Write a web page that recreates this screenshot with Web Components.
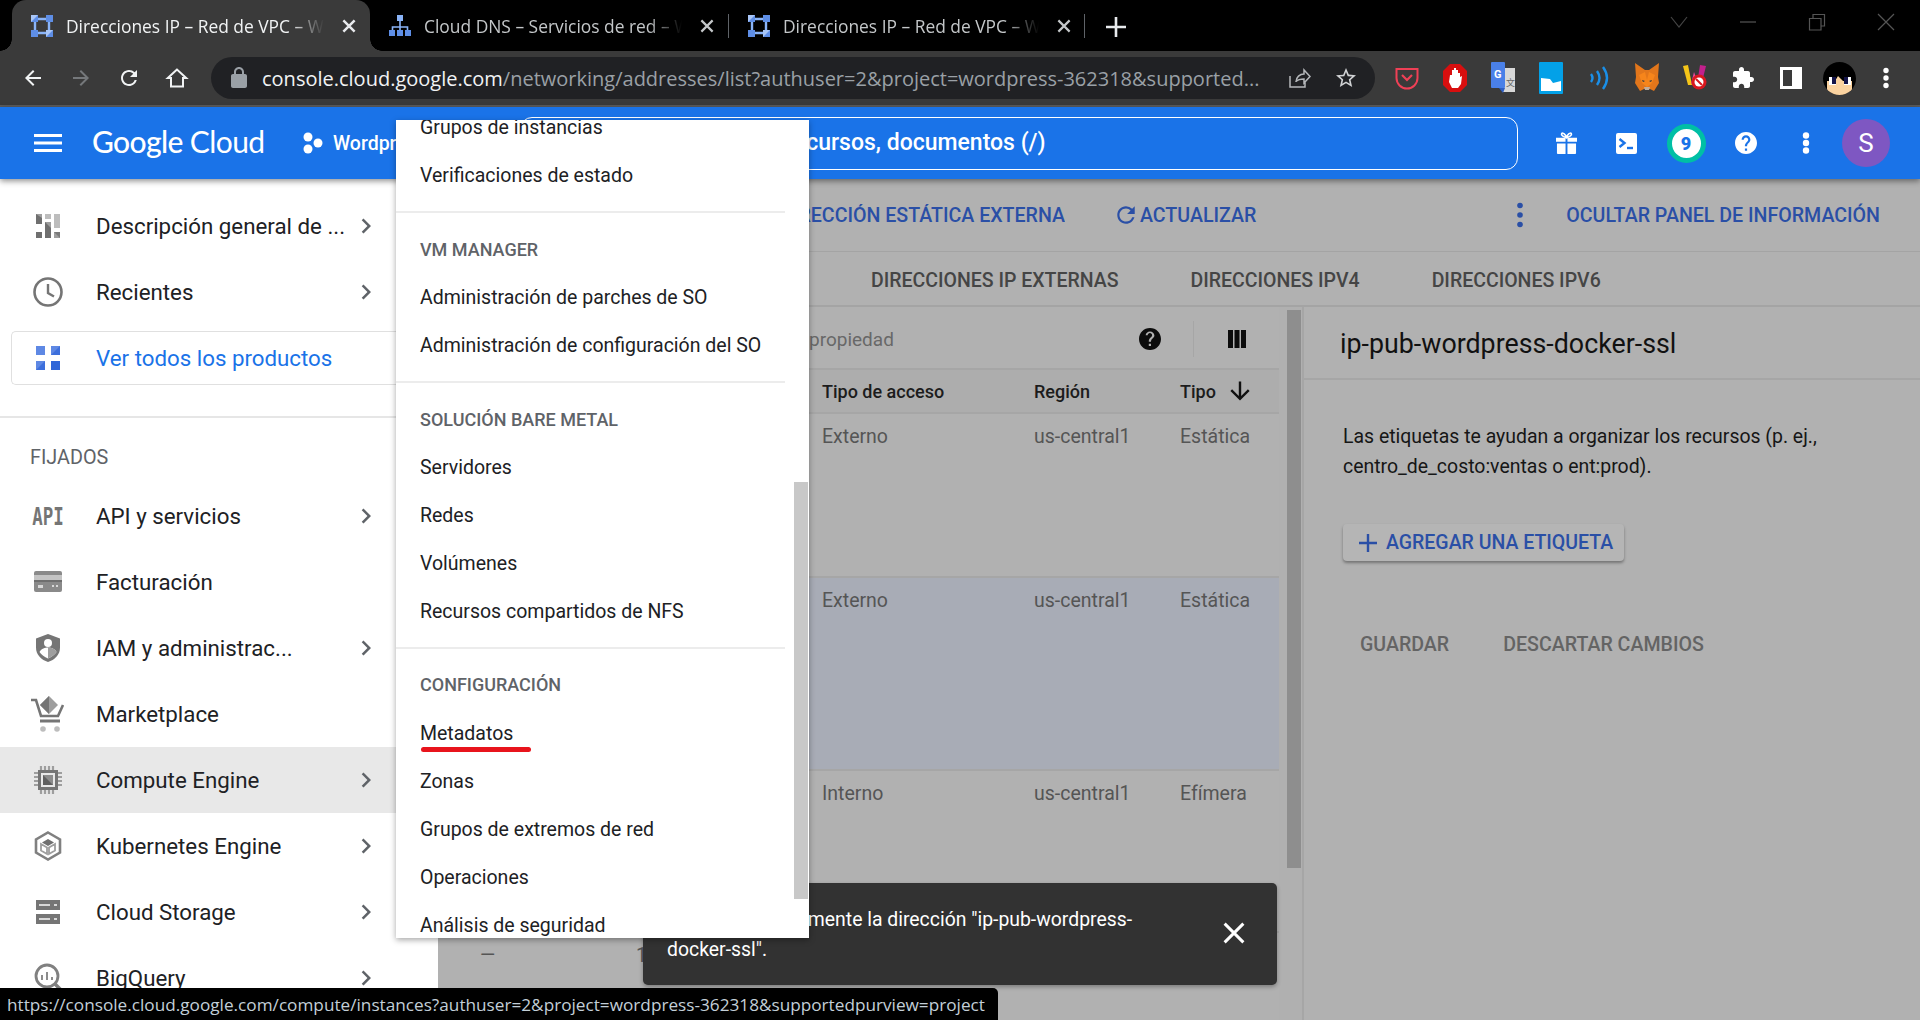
<!DOCTYPE html>
<html lang="es"><head><meta charset="utf-8"><title>Direcciones IP</title>
<style>
html,body{margin:0;height:100%;overflow:hidden;background:#fff;font-family:Roboto,"Liberation Sans",sans-serif}
</style></head><body>
<gc-app>
<browser-tabs></browser-tabs>
<browser-toolbar></browser-toolbar>
<gc-header></gc-header>
<gc-main>
  <gc-sidebar>
    <nav-item chevron><svg slot="icon" width="24" height="24" viewBox="0 0 24 24"><path fill="#9e9e9e" d="M0 0h6v10H0z"/><path fill="#6f6f6f" d="M0 0l6 4v6H0z"/><path fill="#6f6f6f" d="M0 18h6v6H0z"/><path fill="#bdbdbd" d="M9 0h6v5H9z"/><path fill="#9e9e9e" d="M9 8h6v16H9z"/><path fill="#6f6f6f" d="M9 8l6 6v10H9z"/><path fill="#bdbdbd" d="M18 0h6v14h-6z"/><path fill="#7a7a7a" d="M18 18h6v6h-6z"/><path fill="#9e9e9e" d="M18 18l6 6h-6z"/></svg>Descripción general de ...</nav-item>
    <nav-item chevron><svg slot="icon" width="32" height="32" viewBox="0 0 32 32" style="margin:-4px"><circle cx="16" cy="16" r="13.5" fill="none" stroke="#757575" stroke-width="2.6"/><path d="M16 8v9l6 3.5" fill="none" stroke="#757575" stroke-width="2.4"/></svg>Recientes</nav-item>
    <nav-item boxed><svg slot="icon" width="24" height="24" viewBox="0 0 24 24"><path fill="#5e88e4" d="M0 0h9v9H0z"/><path fill="#5e88e4" d="M15 0h9v9h-9z"/><path fill="#3d6fdc" d="M24 0v9h-9z"/><path fill="#5e88e4" d="M0 15h9v9H0z"/><path fill="#3d6fdc" d="M0 24l9-9v9z"/><path fill="#2f66d8" d="M15 15h9v9h-9z"/></svg>Ver todos los productos</nav-item>
    <nav-divider></nav-divider>
    <nav-heading>FIJADOS</nav-heading>
    <nav-item chevron><svg slot="icon" width="32" height="24" viewBox="0 0 44 24" preserveAspectRatio="none" style="margin:0 -4px"><text x="0.500" y="21" font-family="DejaVu Sans Mono" font-weight="700" font-size="24" fill="#757575">API</text></svg>API y servicios</nav-item>
    <nav-item><svg slot="icon" width="28" height="24" viewBox="0 0 28 24" style="margin:0 -2px"><rect y="1" width="28" height="21" rx="2" fill="#8a8a8a"/><path fill="#c4c4c4" d="M0 5h28v5H0z"/><path fill="#6f6f6f" d="M0 10h28v2H0z"/><path fill="#d8d8d8" d="M4 15h5v3H4zM18 15h2v2h-2zM22 15h2v2h-2z"/></svg>Facturación</nav-item>
    <nav-item chevron><svg slot="icon" width="24" height="30" viewBox="0 0 24 30" style="margin:-3px 0"><path fill="#757575" d="M12 1l12 4.5v9C24 22 18.5 27 12 29 5.500 27 0 22 0 14.500v-9z"/><circle cx="12" cy="10" r="4" fill="#fff"/><path fill="#fff" d="M3.500 19c2-3.500 5.500-4.500 8.500-4.500s6.500 1 8.500 4.500c-2 3-5 5-8.500 6.500-3.500-1.500-6.500-3.500-8.500-6.500z"/><path fill="#9e9e9e" d="M12 14.500c3 0 6.500 1 8.500 4.500-2 3-5 5-8.500 6.500z"/></svg>IAM y administrac...</nav-item>
    <nav-item><svg slot="icon" width="34" height="36" viewBox="0 0 34 36" style="margin:-6px -5px"><path fill="#9e9e9e" d="M18 0l9 9-9 9-9-9z"/><path fill="#757575" d="M18 0v18l-9-9z"/><path d="M0 4h5l5 16h17l5-11" fill="none" stroke="#757575" stroke-width="2.600"/><path d="M9 25h20" stroke="#757575" stroke-width="3"/><circle cx="12" cy="33" r="2.800" fill="#bdbdbd"/><circle cx="26" cy="33" r="2.800" fill="#bdbdbd"/></svg>Marketplace</nav-item>
    <nav-item chevron active><svg slot="icon" width="28" height="28" viewBox="0 0 28 28" style="margin:-2px"><rect x="4" y="4" width="20" height="20" fill="#757575"/><rect x="7" y="7" width="14" height="14" fill="#e8e8e8"/><rect x="9" y="9" width="10" height="10" fill="#8c8c8c"/><path fill="#5f5f5f" d="M9 9l10 10H9z"/><path d="M7 0v4M11 0v4M15 0v4M19 0v4M7 24v4M11 24v4M15 24v4M19 24v4M0 7h4M0 11h4M0 15h4M0 19h4M24 7h4M24 11h4M24 15h4M24 19h4" stroke="#9e9e9e" stroke-width="2.200"/></svg>Compute Engine</nav-item>
    <nav-item chevron><svg slot="icon" width="28" height="30" viewBox="0 0 28 30" style="margin:-3px -2px"><path d="M14 1.500l12 7v13l-12 7-12-7v-13z" fill="none" stroke="#808080" stroke-width="2.600"/><path fill="#6f6f6f" d="M14 8l6 3.500-6 3.500-6-3.500z"/><path fill="none" stroke="#9e9e9e" stroke-width="1.800" d="M7 13l6 3.500V23l-6-3.500zM21 13l-6 3.500V23l6-3.500z"/></svg>Kubernetes Engine</nav-item>
    <nav-item chevron><svg slot="icon" width="24" height="24" viewBox="0 0 24 24"><path fill="#757575" d="M0 0h24v10H0zM0 14h24v10H0z"/><path fill="#d8d8d8" d="M3 4h11v2H3zM3 18h11v2H3zM18 4h3v2h-3zM18 18h3v2h-3z"/></svg>Cloud Storage</nav-item>
    <nav-item chevron><svg slot="icon" width="28" height="30" viewBox="0 0 28 30" style="margin:-3px -2px"><circle cx="13" cy="13" r="11" fill="none" stroke="#808080" stroke-width="2.800"/><path d="M8 12v5M13 9v8M18 14v3" stroke="#8c8c8c" stroke-width="2"/><path d="M21 21l7 7" stroke="#808080" stroke-width="3.500"/></svg>BigQuery</nav-item>
  </gc-sidebar>
  <gc-content></gc-content>
</gc-main>
<gc-flyout>
  <fly-item>Grupos de instancias</fly-item>
  <fly-item>Verificaciones de estado</fly-item>
  <fly-divider></fly-divider>
  <fly-heading>VM MANAGER</fly-heading>
  <fly-item>Administración de parches de SO</fly-item>
  <fly-item>Administración de configuración del SO</fly-item>
  <fly-divider></fly-divider>
  <fly-heading>SOLUCIÓN BARE METAL</fly-heading>
  <fly-item>Servidores</fly-item>
  <fly-item>Redes</fly-item>
  <fly-item>Volúmenes</fly-item>
  <fly-item>Recursos compartidos de NFS</fly-item>
  <fly-divider></fly-divider>
  <fly-heading>CONFIGURACIÓN</fly-heading>
  <fly-item marked>Metadatos</fly-item>
  <fly-item>Zonas</fly-item>
  <fly-item>Grupos de extremos de red</fly-item>
  <fly-item>Operaciones</fly-item>
  <fly-item>Análisis de seguridad</fly-item>
</gc-flyout>
<gc-snackbar>Se creó correctamente la dirección "ip-pub-wordpress-docker-ssl".</gc-snackbar>
<status-bubble>https://console.cloud.google.com/compute/instances?authuser=2&amp;project=wordpress-362318&amp;supportedpurview=project</status-bubble>
</gc-app>
<script>
function def(tag, html){
  customElements.define(tag, class extends HTMLElement{
    constructor(){super();this.attachShadow({mode:'open'}).innerHTML=html;}
  });
}
const UI='"Open Sans","Noto Sans",sans-serif';
const xIcon=(s,c,w)=>`<svg width="${s}" height="${s}" viewBox="0 0 16 16"><path d="M3 3l10 10M13 3L3 13" stroke="${c}" stroke-width="${w}" fill="none"/></svg>`;
const netFav=`<svg width="22" height="22" viewBox="0 0 22 22"><path d="M4 3v16M18 3v16M4 4h14M4 18h14" stroke="#8ab4f8" stroke-width="2.400" fill="none"/><path fill="#5e8ee6" d="M0 0h7v7H0zM15 0h7v7h-7zM0 15h7v7H0zM15 15h7v7h-7z"/><path fill="#a9c6f7" d="M0 0h7L0 7zM15 15h7l-7 7z"/></svg>`;
const dnsFav=`<svg width="22" height="22" viewBox="0 0 22 22"><path d="M11 6v6M3.500 15v-3h15v3M11 12v3" stroke="#8ab4f8" stroke-width="1.600" fill="none"/><path fill="#8ab4f8" d="M8 0h6v6H8z"/><path fill="#5e8ee6" d="M0 15h6v6H0zM8 15h6v6H8zM16 15h6v6h-6z"/></svg>`;

def('gc-app',`<style>:host{display:flex;flex-direction:column;height:1020px;width:1920px;position:relative;overflow:hidden}</style><slot></slot>`);

def('tab-strip-item',`<style>
:host{display:flex;align-items:center;height:42px;flex:none;width:358px;box-sizing:border-box;padding-left:19px;color:#c4c7c9;font:17.400px ${UI};position:relative}
:host([active]){background:#3a3a3a;color:#f1f3f4;border-radius:14px 14px 0 0;height:51px}
:host([active])::before,:host([active])::after{content:"";position:absolute;bottom:0;width:12px;height:12px;background:radial-gradient(circle at 0 0,transparent 11.500px,#3a3a3a 12px)}
:host([active])::before{left:-12px}
:host([active])::after{right:-12px;background:radial-gradient(circle at 100% 0,transparent 11.500px,#3a3a3a 12px)}
.t{margin-left:13px;width:266px;white-space:nowrap;overflow:hidden;-webkit-mask-image:linear-gradient(90deg,#000 84%,transparent 97%);mask-image:linear-gradient(90deg,#000 84%,transparent 97%)}
.x{margin-left:8px;display:flex}
:host(.n) .t{width:264px}
</style><slot name="fav"></slot><span class="t"><slot></slot></span><span class="x"><slot name="x"></slot></span>`);

def('browser-tabs',`<style>
:host{display:flex;height:51px;background:#000;flex:none;align-items:flex-start;padding-left:12px;box-sizing:border-box}
.sep{width:1px;height:24px;background:#5f6368;margin-top:14px;flex:none}
.pl{margin:15px 0 0 19px;flex:none}
.end{margin-left:auto;display:flex;align-items:center;height:44px;gap:0}
.end span{width:69px;display:flex;justify-content:center}
tab-strip-item{align-self:flex-start}
.i{margin-top:5px}
.n{margin-right:-3px}
</style>
<tab-strip-item active>${netFav.replace('<svg','<svg slot="fav"')}Direcciones IP – Red de VPC – Wordpress${xIcon(18,'#e8eaed',2.2).replace('<svg','<svg slot="x"')}</tab-strip-item>
<tab-strip-item class="i">${dnsFav.replace('<svg','<svg slot="fav"')}Cloud DNS – Servicios de red – Wordpress${xIcon(18,'#c4c7c9',1.900).replace('<svg','<svg slot="x"')}</tab-strip-item>
<span class="sep"></span>
<tab-strip-item class="i n">${netFav.replace('<svg','<svg slot="fav"')}Direcciones IP – Red de VPC – Wordpress${xIcon(18,'#c4c7c9',1.900).replace('<svg','<svg slot="x"')}</tab-strip-item>
<span class="sep"></span>
<svg class="pl" width="24" height="24" viewBox="0 0 24 24"><path d="M12 2v20M2 12h20" stroke="#e8eaed" stroke-width="2.600"/></svg>
<div class="end">
<span><svg width="20" height="12" viewBox="0 0 20 12"><path d="M2 1l8 10 8-10" stroke="#444" stroke-width="1.200" fill="none"/></svg></span>
<span><svg width="16" height="2"><path d="M0 1h16" stroke="#555" stroke-width="1.200"/></svg></span>
<span><svg width="18" height="18" viewBox="0 0 18 18"><path d="M1.500 5.500h11.500v11.500H1.500zM5 5.500V1.500h11.500v11.500H13" stroke="#555" stroke-width="1.200" fill="none"/></svg></span>
<span><svg width="18" height="18" viewBox="0 0 18 18"><path d="M1 1l16 16M17 1L1 17" stroke="#555" stroke-width="1.200"/></svg></span>
</div>`);

def('browser-toolbar',`<style>
:host{display:flex;align-items:center;height:56px;background:#3a3a3a;border-bottom:2px solid #5c5c5c;box-sizing:border-box;flex:none;padding:0 0 0 21px}
.nav{display:flex;width:48px;flex:none}
.omni{margin-left:-2px;width:1164px;height:42px;border-radius:21px;background:#202124;display:flex;align-items:center;flex:none;box-sizing:border-box;padding-left:16px;font:20px ${UI};color:#9aa0a6;white-space:nowrap}
.omni b{font-weight:400;color:#f1f3f4}
.url{margin-left:11px;width:1000px;overflow:hidden}
.a{display:flex;width:47px;flex:none;justify-content:center}
.ext{display:flex;align-items:center;margin-left:8px}
.ext span{width:48px;display:flex;justify-content:center;align-items:center}
</style>
<span class="nav"><svg width="24" height="24" viewBox="0 0 24 24"><path fill="#f1f3f4" d="M20 11H7.830l5.590-5.590L12 4l-8 8 8 8 1.410-1.410L7.830 13H20v-2z"/></svg></span>
<span class="nav"><svg width="24" height="24" viewBox="0 0 24 24"><path fill="#75787b" d="M12 4l-1.410 1.410L16.170 11H4v2h12.170l-5.580 5.590L12 20l8-8z"/></svg></span>
<span class="nav"><svg width="24" height="24" viewBox="0 0 24 24"><path fill="#f1f3f4" d="M17.650 6.350A7.958 7.958 0 0012 4c-4.420 0-7.990 3.580-7.990 8s3.570 8 7.990 8c3.730 0 6.840-2.550 7.730-6h-2.080A5.990 5.990 0 0112 18c-3.310 0-6-2.690-6-6s2.690-6 6-6c1.660 0 3.140.690 4.220 1.780L13 11h7V4l-2.350 2.350z"/></svg></span>
<span class="nav"><svg width="24" height="24" viewBox="0 0 24 24"><path fill="none" stroke="#f1f3f4" stroke-width="2" d="M12 3.500L2.800 12H6v8.500h12V12h3.200z"/></svg></span>
<div class="omni">
<svg width="24" height="24" viewBox="0 0 24 24" style="flex:none"><path fill="#9aa0a6" d="M18 8h-1V6c0-2.760-2.240-5-5-5S7 3.240 7 6v2H6c-1.100 0-2 .9-2 2v10c0 1.100.9 2 2 2h12c1.100 0 2-.9 2-2V10c0-1.100-.9-2-2-2zM9 6c0-1.660 1.340-3 3-3s3 1.340 3 3v2H9V6z"/></svg>
<span class="url"><b>console.cloud.google.com</b>/networking/addresses/list?authuser=2&amp;project=wordpress-362318&amp;supported...</span>
<span class="a" style="margin-left:13px"><svg width="24" height="24" viewBox="0 0 24 24"><path fill="none" stroke="#b5b8bb" stroke-width="1.500" d="M3 10v11h15v-5M9 16c0-5 4-8 8-8V4l6 6.500-6 6.500v-4c-3 0-6 .5-8 2.500z"/></svg></span>
<span class="a"><svg width="24" height="24" viewBox="0 0 24 24"><path fill="#d0d2d4" d="M22 9.240l-7.190-.620L12 2 9.190 8.630 2 9.240l5.460 4.730L5.820 21 12 17.270 18.180 21l-1.630-7.030L22 9.240zM12 15.400l-3.760 2.270 1-4.280-3.320-2.880 4.380-.380L12 6.100l1.710 4.040 4.380.380-3.320 2.880 1 4.280L12 15.400z"/></svg></span>
</div>
<div class="ext">
<span><svg width="24" height="24" viewBox="0 0 24 24"><path fill="none" stroke="#ef4056" stroke-width="2" d="M1.500 3h21v9a10.500 10.500 0 01-21 0z"/><path fill="none" stroke="#ef4056" stroke-width="2.200" d="M7 9l5 5 5-5"/></svg></span>
<span><svg width="24" height="30" viewBox="0 0 24 30"><path fill="#d80f0f" d="M7 1h10l7 7v14l-7 7H7l-7-7V8z"/><path fill="#fff" d="M7 12h2V7h2v-2h2v2h2v3h2v4l2-1-1 8-3 4h-6l-3-6z"/></svg></span>
<span><svg width="24" height="32" viewBox="0 0 24 32"><path fill="#d8d8d8" d="M8 6h16v24H12z"/><rect width="14" height="26" rx="1" fill="#4a80e8"/><path fill="#2e5fc4" d="M8 26h6l-2 5z"/><text x="3" y="16" font-family="Roboto" font-weight="700" font-size="11" fill="#fff">G</text><text x="15" y="24" font-family="Noto Sans CJK SC" font-size="9" fill="#666">文</text></svg></span>
<span><svg width="24" height="32" viewBox="0 0 24 32"><rect width="24" height="32" rx="1" fill="#03a1e8"/><path fill="#fff" d="M2 16l9 1 3 4 8-2v10H2z"/></svg></span>
<span><svg width="20" height="24" viewBox="0 0 20 24"><path d="M2 8q3 4 0 8M8 5q5 7 0 14M14 1q8 11 0 22" fill="none" stroke="#1a8fe8" stroke-width="2.400"/></svg></span>
<span><svg width="24" height="30" viewBox="0 0 24 30"><path fill="#e2761b" d="M0 0l10 7h4l10-7-1 14 1 6-5 8-4-2h-6l-4 2-5-8 1-6z"/><path fill="#f6851b" d="M4 12l6-3 2 8 2-8 6 3-3 8-5 4-5-4z"/><path fill="#c0ad9e" d="M9 24h6l-1 3h-4z"/><path fill="#233447" d="M7 17l3 1-2 1zM17 17l-3 1 2 1z"/></svg></span>
<span><svg width="24" height="28" viewBox="0 0 24 28"><path fill="#f5c518" d="M0 2l5-1 4 20H5z"/><path fill="#e6499a" d="M8 20l3-12 3 8z"/><path fill="#c2208c" d="M17 1l6 1-3 12h-5z"/><circle cx="16" cy="18" r="7.500" fill="#d9171e"/><circle cx="16" cy="18" r="4.500" fill="#fff"/><path d="M13 15l6 6" stroke="#d9171e" stroke-width="2"/></svg></span>
<span><svg width="24" height="24" viewBox="0 0 24 24"><path fill="#fff" d="M20.500 11H19V7c0-1.100-.9-2-2-2h-4V3.500C13 2.120 11.880 1 10.500 1S8 2.120 8 3.500V5H4c-1.100 0-1.990.9-1.990 2v3.800H3.500c1.490 0 2.700 1.210 2.700 2.700s-1.210 2.700-2.700 2.700H2V20c0 1.100.9 2 2 2h3.800v-1.500c0-1.490 1.210-2.700 2.700-2.700 1.490 0 2.700 1.210 2.700 2.700V22H17c1.100 0 2-.9 2-2v-4h1.500c1.380 0 2.500-1.120 2.500-2.500S21.880 11 20.500 11z"/></svg></span>
<span><svg width="22" height="22" viewBox="0 0 22 22"><path fill="#fff" fill-rule="evenodd" d="M0 0h22v22H0zM3 3v16h9V3z"/></svg></span>
<span><svg width="33" height="33" viewBox="0 0 33 33"><defs><clipPath id="av"><circle cx="16.500" cy="16.500" r="16.500"/></clipPath></defs><g clip-path="url(#av)"><rect width="33" height="33" fill="#000"/><path fill="#fbd3a0" d="M4 19h8l3-5 3 3 2 2h9v14H4z"/><path fill="#fff" d="M6 15h7v8H6zM21 15h7v8h-7z"/><path fill="#14144a" d="M9 15h4v7H9zM21 15h4v7h-4z"/></g></svg></span>
<span style="width:46px"><svg width="8" height="22" viewBox="0 0 8 22"><circle cx="4" cy="3.500" r="2.700" fill="#fff"/><circle cx="4" cy="11" r="2.700" fill="#fff"/><circle cx="4" cy="18.500" r="2.700" fill="#fff"/></svg></span>
</div>`);

def('gc-header',`<style>
:host{display:flex;align-items:center;height:72px;flex:none;background:#1a73e8;box-shadow:0 2px 6px rgba(0,0,0,.45);position:relative;z-index:3;color:#fff;box-sizing:border-box;padding-left:34px}
.logo{font:500 30px/36px Lato,Roboto,sans-serif;letter-spacing:-.6px;margin:-5px 0 0 30px;width:177px;white-space:nowrap;flex:none}
.logo i{font-style:normal;font-weight:400}
.proj{display:flex;align-items:center;margin-left:34px;width:217px;font:500 19.500px Roboto,sans-serif;flex:none;gap:10px;overflow:hidden}
.search{width:998px;height:53px;box-sizing:border-box;border:1.500px solid #fff;border-radius:12px;display:flex;align-items:center;padding:0 0 2px 61px;font:500 23px Roboto,sans-serif;white-space:nowrap;flex:none}
.i{display:flex;justify-content:center;width:60px;flex:none}
.acts{display:flex;align-items:center;margin-left:18px}
.badge{width:39px;height:39px;border-radius:50%;border:5px solid #00bfa5;background:#fff;box-sizing:border-box;color:#1a73e8;font:900 18px Roboto,sans-serif;display:flex;align-items:center;justify-content:center}
.av{width:48px;height:48px;border-radius:50%;background:#7e57c2;font:400 26px Roboto,sans-serif;display:flex;align-items:center;justify-content:center;margin-left:6px}
</style>
<svg width="28" height="18" viewBox="0 0 28 18" style="flex:none"><path fill="#fff" d="M0 0h28v3H0zM0 7.500h28v3H0zM0 15h28v3H0z"/></svg>
<span class="logo">Google <i>Cloud</i></span>
<span class="proj"><svg width="20" height="24" viewBox="0 0 20 24" style="flex:none"><circle cx="5" cy="6" r="4.500" fill="#fff"/><circle cx="5" cy="18" r="4.500" fill="#fff"/><circle cx="15" cy="12" r="4.500" fill="#fff"/></svg>Wordpress</span>
<div class="search">Buscar productos y recursos, documentos (/)</div>
<div class="acts">
<span class="i"><svg width="21" height="22" viewBox="0 0 22 27" preserveAspectRatio="none"><path fill="#fff" d="M0 7h10v5H0zM12 7h10v5H12zM1 14h9v13H2a1 1 0 01-1-1zM12 14h9v12a1 1 0 01-1 1h-8z"/><path d="M11 7C8 6 5 4 6 2s4 1 5 5zm0 0c3-1 6-3 5-5s-4 1-5 5z" fill="none" stroke="#fff" stroke-width="1.800"/></svg></span>
<span class="i"><svg width="21" height="21" viewBox="0 0 21 21"><rect width="21" height="21" rx="2" fill="#fff"/><path d="M3.500 6l5 4-5 4" fill="none" stroke="#1a73e8" stroke-width="2.400"/><path d="M11 15h6" stroke="#1a73e8" stroke-width="2.400"/></svg></span>
<span class="i"><span class="badge">9</span></span>
<span class="i"><svg viewBox="2 2 20 20" style="width:22px;height:22px"><path fill="#fff" d="M12 2C6.480 2 2 6.480 2 12s4.480 10 10 10 10-4.480 10-10S17.520 2 12 2zm1 17h-2v-2h2v2zm2.070-7.750l-.9.920C13.450 12.900 13 13.500 13 15h-2v-.5c0-1.100.450-2.100 1.170-2.830l1.240-1.260c.370-.360.590-.860.590-1.410 0-1.100-.9-2-2-2s-2 .9-2 2H8c0-2.210 1.790-4 4-4s4 1.790 4 4c0 .880-.360 1.680-.930 2.250z"/></svg></span>
<span class="i"><svg width="8" height="22" viewBox="0 0 8 22"><circle cx="4" cy="3.500" r="3.200" fill="#fff"/><circle cx="4" cy="11" r="3.200" fill="#fff"/><circle cx="4" cy="18.500" r="3.200" fill="#fff"/></svg></span>
<span class="av">S</span>
</div>`);

def('gc-main',`<style>:host{display:flex;flex:1;min-height:0}</style><slot></slot>`);
def('gc-sidebar',`<style>:host{display:block;width:438px;flex:none;background:#fff;padding-top:14px;box-sizing:border-box;overflow:hidden}</style><slot></slot>`);
def('nav-item',`<style>
:host{display:flex;align-items:center;height:66px;padding-left:36px;font:400 22.300px Roboto,sans-serif;color:#202124;position:relative;white-space:nowrap}
.ic{width:24px;height:24px;display:flex;align-items:center;justify-content:center;flex:none;margin-right:36px}
.ch{display:none;position:absolute;left:351px;top:18px}
:host([chevron]) .ch{display:block}
:host([active]){background:#e8e8e8}
:host([boxed]){color:#1a73e8;height:54px;margin:6px 0 6px 11px;padding-left:24px;border:1px solid #e0e0e0;border-right:0;border-radius:5px 0 0 5px;box-sizing:border-box}
</style><span class="ic"><slot name="icon"></slot></span><slot></slot>
<svg class="ch" width="30" height="30" viewBox="0 0 24 24"><path fill="#5f6368" d="M10 6L8.590 7.410 13.170 12l-4.580 4.590L10 18l6-6z"/></svg>`);
def('nav-divider',`<style>:host{display:block;height:2px;background:#e6e6e6;margin-top:31px}</style>`);
def('nav-heading',`<style>:host{display:flex;align-items:center;height:65px;padding:14px 0 0 30px;box-sizing:border-box;font:400 19.800px Roboto,sans-serif;color:#5f6368}</style><slot></slot>`);

def('gc-flyout',`<style>
:host{position:absolute;left:396px;top:120px;width:413px;height:818px;background:#fff;box-shadow:0 2px 6px rgba(0,0,0,.35);overflow:hidden;z-index:5;display:block}
.inner{margin-top:-16.500px;width:389px}
.bar{position:absolute;left:398px;top:362px;width:14px;height:417px;background:#c8c8c8}
</style><div class="inner"><slot></slot></div><div class="bar"></div>`);
def('fly-item',`<style>
:host{display:flex;align-items:center;height:48.100px;padding-left:24px;font:400 19.500px Roboto,sans-serif;color:#202124;white-space:nowrap;position:relative}
:host([marked])::after{content:"";position:absolute;left:25px;top:38px;width:110px;height:5px;border-radius:3px;background:#e8141c}
</style><slot></slot>`);
def('fly-heading',`<style>:host{display:flex;align-items:center;height:48.100px;padding-left:24px;font:500 18px Roboto,sans-serif;color:#5f6368;white-space:nowrap}</style><slot></slot>`);
def('fly-divider',`<style>:host{display:flex;align-items:center;height:25.500px}i{display:block;width:100%;height:2px;background:#ececec}</style><i></i>`);

const BLUE='#2a4fa6';
def('content-btn',`<style>:host{display:flex;align-items:center;font:500 19.600px Roboto,sans-serif;color:${BLUE};white-space:nowrap;flex:none}</style><slot></slot>`);
def('addr-row',`<style>
:host{display:grid;grid-template-columns:42px 156px 186px 212px 146px 98px;padding-top:6px;box-sizing:border-box;font:400 19.500px Roboto,sans-serif;color:#555;border-bottom:2px solid #a6a6a6;align-items:start;line-height:34px}
:host([sel]){background:#a8acb6}
</style><slot></slot>`);
def('gc-content',`<style>
:host{display:flex;flex-direction:column;flex:1;min-width:0;background:#b1b1b1;overflow:hidden}
.tb{display:flex;align-items:center;height:73px;flex:none;border-bottom:1px solid #a4a4a4;box-sizing:border-box}
.clip{width:627px;display:flex;justify-content:flex-end;flex:none;overflow:hidden}
.tabs{display:flex;align-items:center;height:55px;flex:none;padding:4px 0 0 433px;gap:72px;font:500 19.500px Roboto,sans-serif;color:#454545;border-bottom:2px solid #a4a4a4;box-sizing:border-box;white-space:nowrap}
.body{display:flex;flex:1;min-height:0}
.left{width:841px;flex:none;display:flex;flex-direction:column}
.filter{display:flex;align-items:center;height:63px;flex:none;box-sizing:border-box;padding:3px 0 0 371px;font:400 19px Roboto,sans-serif;color:#686868;border-bottom:2px solid #a6a6a6}
.head{display:grid;grid-template-columns:384px 212px 146px 98px;align-items:center;height:44px;flex:none;background:#adadad;border-bottom:2px solid #a6a6a6;box-sizing:border-box;font:500 18px Roboto,sans-serif;color:#1c1c1c;white-space:nowrap}
.sb{width:25px;flex:none;background:#b0b0b0;border-right:2px solid #a6a6a6;box-sizing:border-box;padding:3px 0 0 8px}
.sb i{display:block;width:14px;height:558px;background:#8e8e8e}
.right{flex:1;min-width:0}
.title{height:73px;box-sizing:border-box;border-bottom:2px solid #a6a6a6;padding:2px 0 0 36px;display:flex;align-items:center;font:400 26.800px Roboto,sans-serif;color:#111}
.p{margin:42px 0 0 39px;font:400 19.450px/30px Roboto,sans-serif;color:#161616;white-space:nowrap}
.add{margin:42px 0 0 39px;width:281px;height:37px;background:#b5b5b5;border-radius:4px;box-shadow:0 2px 3px rgba(0,0,0,.35);display:flex;align-items:center;padding-left:16px;box-sizing:border-box;gap:9px;font:500 19.500px Roboto,sans-serif;color:${BLUE};white-space:nowrap}
.acts{display:flex;margin:72px 0 0 56px;gap:54px;font:500 19.600px Roboto,sans-serif;color:#646464;white-space:nowrap}
</style>
<div class="tb">
 <div class="clip"><content-btn>RESERVAR DIRECCIÓN ESTÁTICA EXTERNA</content-btn></div>
 <content-btn style="margin-left:49px;gap:2px"><svg width="24" height="24" viewBox="1 1 22 22"><path fill="${BLUE}" d="M17.650 6.350A7.958 7.958 0 0012 4c-4.420 0-7.990 3.580-7.990 8s3.570 8 7.990 8c3.730 0 6.840-2.550 7.730-6h-2.080A5.990 5.990 0 0112 18c-3.310 0-6-2.690-6-6s2.690-6 6-6c1.660 0 3.140.690 4.220 1.780L13 11h7V4l-2.350 2.350z"/></svg>ACTUALIZAR</content-btn>
 <svg width="8" height="26" viewBox="0 0 8 26" style="margin-left:260px;flex:none"><circle cx="4" cy="3.500" r="2.800" fill="${BLUE}"/><circle cx="4" cy="13" r="2.800" fill="${BLUE}"/><circle cx="4" cy="22.500" r="2.800" fill="${BLUE}"/></svg>
 <content-btn style="margin-left:42px">OCULTAR PANEL DE INFORMACIÓN</content-btn>
</div>
<div class="tabs"><span>DIRECCIONES IP EXTERNAS</span><span>DIRECCIONES IPV4</span><span>DIRECCIONES IPV6</span></div>
<div class="body">
 <div class="left">
  <div class="filter"><span style="width:329px">propiedad</span>
   <svg width="24" height="24" viewBox="0 0 24 24" style="flex:none"><path fill="#0c0c0c" d="M12 1C5.900 1 1 5.900 1 12s4.900 11 11 11 11-4.900 11-11S18.100 1 12 1zm1 18h-2.200v-2.200H13V19zm2.300-8.300l-1 1c-.8.8-1.300 1.500-1.300 3.100h-2.200v-.6c0-1.200.5-2.300 1.300-3.100l1.400-1.400c.4-.4.6-.9.6-1.500 0-1.200-1-2.200-2.200-2.200s-2.200 1-2.200 2.200H7.700C7.700 6.400 9.600 4.500 12 4.500s4.400 1.900 4.400 4.300c0 .8-.4 1.500-1.100 1.900z"/></svg>
   <span style="width:1px;height:36px;background:#a6a6a6;margin-left:31px"></span>
   <svg width="18" height="18" viewBox="0 0 18 18" style="flex:none;margin-left:34px"><path fill="#0c0c0c" d="M0 0h5v18H0zM6.500 0h5v18h-5zM13 0h5v18h-5z"/></svg>
  </div>
  <div class="head"><span></span><span>Tipo de acceso</span><span>Región</span><span style="display:flex;align-items:center;gap:12px">Tipo <svg width="24" height="24" viewBox="2 2 20 20"><path fill="#111" d="M20 12l-1.410-1.410L13 16.170V4h-2v12.170l-5.580-5.590L4 12l8 8 8-8z"/></svg></span></div>
  <addr-row style="height:164px"><span></span><span></span><span></span><span>Externo</span><span>us-central1</span><span>Estática</span></addr-row>
  <addr-row sel style="height:193px"><span></span><span></span><span></span><span>Externo</span><span>us-central1</span><span>Estática</span></addr-row>
  <addr-row style="height:162px"><span></span><span></span><span></span><span>Interno</span><span>us-central1</span><span>Efímera</span></addr-row>
  <addr-row style="border:0"><span></span><span>—</span><span>1</span></addr-row>
 </div>
 <div class="sb"><i></i></div>
 <div class="right">
  <div class="title">ip-pub-wordpress-docker-ssl</div>
  <div class="p">Las etiquetas te ayudan a organizar los recursos (p. ej.,<br>centro_de_costo:ventas o ent:prod).</div>
  <div class="add"><svg width="18" height="18" viewBox="0 0 18 18" style="flex:none"><path d="M9 0v18M0 9h18" stroke="${BLUE}" stroke-width="2.400"/></svg>AGREGAR UNA ETIQUETA</div>
  <div class="acts"><span>GUARDAR</span><span>DESCARTAR CAMBIOS</span></div>
 </div>
</div>`);

def('gc-snackbar',`<style>
:host{position:absolute;left:643px;top:883px;width:634px;height:102px;background:#323232;border-radius:5px;z-index:4;box-sizing:border-box;padding:22px 0 0 24px;display:flex;color:#fff;font:400 19.400px/30px Roboto,sans-serif;box-shadow:0 2px 4px rgba(0,0,0,.3)}
.t{width:490px}
.x{position:absolute;left:576px;top:35px}
</style><div class="t"><slot></slot></div><span class="x">${xIcon(30,'#fff',1.6)}</span>`);
def('status-bubble',`<style>
:host{position:absolute;left:0;bottom:0;height:32px;width:998px;background:#000;border-radius:0 5px 0 0;z-index:6;color:#c3cfd8;font:17.200px ${UI};display:flex;align-items:center;padding-left:7px;box-sizing:border-box;white-space:nowrap;overflow:hidden}
</style><slot></slot>`);
</script>
</body></html>
